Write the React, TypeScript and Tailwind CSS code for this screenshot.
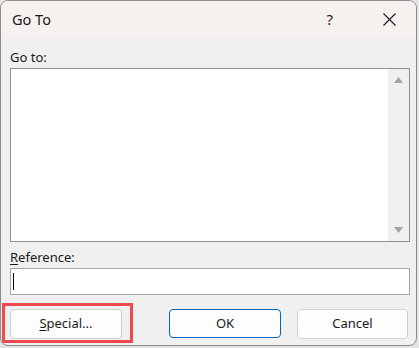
export default function App() {
  const font = { fontFamily: '"Segoe UI", "Noto Sans", sans-serif' };
  return (
    <div className="w-[419px] h-[348px] bg-[#e4e4e4] text-[#1a1a1a]" style={font}>
      <div className="w-[417px] h-[346px] border border-[#8c8c8c] rounded-lg overflow-hidden bg-[#f0f0f0] flex flex-col">
        {/* Title bar */}
        <div className="h-[36px] bg-[#f5f1ef] flex items-center pl-[11px] shrink-0">
          <span className="text-[14.5px] leading-none">Go To</span>
          <span className="ml-auto text-[15px] leading-none">?</span>
          <svg className="ml-[50px] mr-[20px]" width="13" height="13" viewBox="0 0 13 13">
            <path d="M0.5 0.5 L12.5 12.5 M12.5 0.5 L0.5 12.5" stroke="#1a1a1a" strokeWidth="1.1" />
          </svg>
        </div>

        {/* Body */}
        <div className="flex flex-col pl-[9px]">
          <div className="text-[13px] leading-none mt-[14px] h-[17px]">Go to:</div>
          <div className="w-[400px] h-[174px] border border-[#8e8e9c] bg-white flex">
            <div className="flex-1" />
            <div className="w-[21px] bg-[#f0f0f0] flex flex-col items-center justify-between pt-[8px] pb-[8px]">
              <svg width="9" height="6" viewBox="0 0 9 6">
                <path d="M4.5 0 L9 6 L0 6 Z" fill="#a3a3a3" />
              </svg>
              <svg width="9" height="6" viewBox="0 0 9 6">
                <path d="M0 0 L9 0 L4.5 6 Z" fill="#a3a3a3" />
              </svg>
            </div>
          </div>

          <div className="text-[13px] leading-none mt-[9px] h-[17px]">
            <span className="underline underline-offset-2">R</span>eference:
          </div>
          <div className="w-[400px] h-[27px] border border-[#a6a6a6] bg-white flex items-center pl-[2px]">
            <div className="w-px h-[17px] bg-black" />
          </div>
        </div>

        {/* Buttons */}
        <div className="flex items-start mt-[8px] pl-px">
          <div className="w-[131px] h-[40px] border-[3px] border-[#f04a50] pl-[5px] pt-[3px]">
            <button className="w-[112px] h-[30px] bg-[#fdfdfd] border border-[#d0d0d0] rounded text-[13px]">
              <span className="underline underline-offset-2">S</span>pecial...
            </button>
          </div>
          <button className="ml-[36px] mt-[6px] w-[112px] h-[29px] bg-[#fdfdfd] border border-[#0067c0] rounded text-[13px]">
            OK
          </button>
          <button className="ml-[16px] mt-[6px] w-[111px] h-[30px] bg-[#fdfdfd] border border-[#d0d0d0] rounded text-[13px]">
            Cancel
          </button>
        </div>
      </div>
    </div>
  );
}
